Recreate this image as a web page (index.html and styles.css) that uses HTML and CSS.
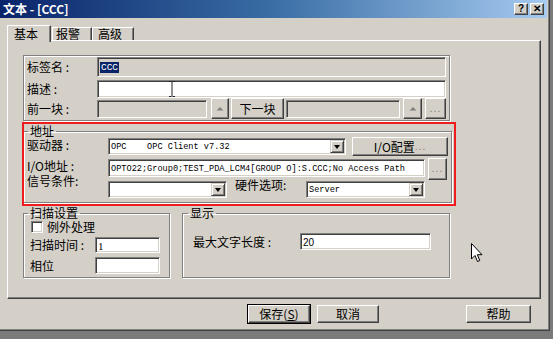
FILE: index.html
```html
<!DOCTYPE html>
<html>
<head>
<meta charset="utf-8">
<title>文本 - [CCC]</title>
<link rel="stylesheet" href="styles.css">
</head>
<body>
<div class="window">
  <div class="titlebar">
    <span class="title">文本 - [CCC]</span>
    <div class="tbtns"><span class="tbtn">?</span><span class="tbtn">✕</span></div>
  </div>
  <div class="tabs">
    <div class="tab active">基本</div>
    <div class="tab t2">报警</div>
    <div class="tab t3">高级</div>
  </div>
  <div class="panel">
    <div class="group1">
      <div class="row r1">
        <span class="lbl l70">标签名 :</span>
        <div class="field disabled w349"><span class="sel mono">CCC</span></div>
      </div>
      <div class="row r2">
        <span class="lbl l70">描述 :</span>
        <div class="field w349"></div>
      </div>
      <div class="row r3">
        <span class="lbl l70">前一块 :</span>
        <div class="field disabled w110 h18"></div>
        <div class="btn upbtn g4"><svg width="8" height="5" viewBox="0 0 8 5"><polygon points="0.5,4.5 4,1 7.5,4.5" fill="#808080"/></svg></div>
        <div class="btn nextbtn">下一块</div>
        <div class="field disabled w114 h18 g2"></div>
        <div class="btn upbtn2"><svg width="8" height="5" viewBox="0 0 8 5"><polygon points="0.5,4.5 4,1 7.5,4.5" fill="#808080"/></svg></div>
        <div class="btn dots1"><span class="dots">...</span></div>
      </div>
    </div>

    <fieldset class="gb addr">
      <legend>地址</legend>
      <div class="frow ra">
        <span class="lbl l81 mt2">驱动器 :</span>
        <div class="field combo w238"><span class="ctext mono">OPC&nbsp;&nbsp;&nbsp;&nbsp;OPC Client v7.32</span><span class="dd"><i class="tri"></i></span></div>
        <div class="btn iocfg">I/O配置 <span class="dots">...</span></div>
      </div>
      <div class="frow rb">
        <span class="lbl l81 mt3">I/O地址 :</span>
        <div class="field ioaddr"><span class="ctext mono">OPTO22;Group0;TEST_PDA_LCM4[GROUP O]:S.CCC;No Access Path</span></div>
        <div class="btn dots2"><span class="dots">...</span></div>
      </div>
      <div class="frow rc">
        <span class="lbl l81 sig">信号条件:</span>
        <div class="field combo w119"><span class="ctext"></span><span class="dd"><i class="tri"></i></span></div>
        <span class="lbl hw">硬件选项:</span>
        <div class="field combo w119"><span class="ctext mono">Server</span><span class="dd"><i class="tri"></i></span></div>
      </div>
    </fieldset>

    <div class="lower">
      <fieldset class="gb scan">
        <legend>扫描设置</legend>
        <div class="srow chk"><span class="checkbox"></span><span class="lbl">例外处理</span></div>
        <div class="srow s2"><span class="lbl l65">扫描时间 :</span><div class="field w65 h16"><span class="ctext serif">1</span></div></div>
        <div class="srow s3"><span class="lbl l65">相位</span><div class="field w65 h17"></div></div>
      </fieldset>
      <fieldset class="gb disp">
        <legend>显示</legend>
        <div class="srow d1"><span class="lbl l107">最大文字长度 :</span><div class="field w131 h17"><span class="ctext sans">20</span></div></div>
      </fieldset>
    </div>

    <div class="redbox"></div>
  </div>
  <div class="footer">
    <div class="btn fbtn default">保存(<u>S</u>)</div>
    <div class="btn fbtn">取消</div>
    <div class="btn fbtn help">帮助</div>
  </div>
</div>

<svg class="ibeam" width="8" height="16" viewBox="0 0 8 16">
  <path d="M1 0.5h2.5M4.5 0.5h2.5M4 1v14M1 15.5h2.5M4.5 15.5h2.5" stroke="#222" stroke-width="1" fill="none"/>
</svg>
<svg class="pointer" width="13" height="20" viewBox="0 0 13 20">
  <path d="M0.5 0.5 L0.5 16 L4 12.5 L6.5 18.5 L8.8 17.5 L6.3 11.7 L11 11.7 Z" fill="#fff" stroke="#000" stroke-width="1" stroke-linejoin="miter"/>
</svg>
</body>
</html>
```

FILE: styles.css
```css
* { box-sizing: border-box; }

body {
  margin: 0;
  width: 553px;
  height: 339px;
  background: #7b7b7b;
  font-family: "Noto Sans CJK SC", "Noto Sans", sans-serif;
  font-size: 12px;
  color: #000;
  position: relative;
  overflow: hidden;
}

.window {
  width: 550px;
  height: 331px;
  background: #d4d0c8;
  border-right: 1px solid #404040;
  border-bottom: 1px solid #404040;
  box-shadow: inset -1px -1px 0 #808080;
  display: flex;
  flex-direction: column;
}

/* title bar */
.titlebar {
  height: 18px;
  margin-right: 2px;
  background: linear-gradient(90deg, #0a246a 0%, #3a6ea5 50%, #a6caf0 100%);
  display: flex;
  align-items: center;
  justify-content: space-between;
  padding: 0 3px 0 3px;
  flex: none;
}
.title {
  color: #fff;
  font-weight: bold;
  font-size: 12px;
  line-height: 18px;
}
.tbtns { display: flex; gap: 2px; }
.tbtn {
  width: 14px;
  height: 12px;
  background: #d4d0c8;
  border: 1px solid;
  border-color: #fff #404040 #404040 #fff;
  box-shadow: inset -1px -1px 0 #808080;
  font-family: "Liberation Sans", sans-serif;
  font-weight: bold;
  font-size: 10px;
  line-height: 10px;
  text-align: center;
}

/* tabs */
.tabs {
  flex: none;
  height: 15px;
  margin-top: 7px;
  padding-left: 7px;
  display: flex;
  align-items: flex-end;
}
.tab {
  height: 13px;
  border: 1px solid;
  border-bottom: none;
  border-color: #fff #404040 transparent #fff;
  box-shadow: inset -1px 0 0 #808080;
  line-height: 12px;
  padding-left: 4px;
  background: #d4d0c8;
}
.tab.active {
  width: 44px;
  height: 17px;
  margin-bottom: -2px;
  margin-right: 1px;
  padding-left: 6px;
  padding-top: 2px;
  position: relative;
  z-index: 1;
}
.t2 { width: 40px; padding-left: 3px; }
.t3 { width: 42px; padding-left: 5px; }

/* panel */
.panel {
  flex: none;
  margin-left: 7px;
  width: 534px;
  height: 259px;
  border: 1px solid;
  border-color: #fff #404040 #404040 #fff;
  box-shadow: inset -1px -1px 0 #808080;
  padding: 14px 0 0 15px;
  position: relative;
}

/* generic controls */
.lbl { white-space: nowrap; line-height: 12px; flex: none; }
.l70 { width: 70px; }
.l81 { width: 81px; }
.l65 { width: 65px; margin-left: 3px; }
.l107 { width: 107px; margin-left: 7px; }

.field {
  flex: none;
  border: 1px solid;
  border-color: #808080 #fff #fff #808080;
  box-shadow: inset 1px 1px 0 #404040, inset -1px -1px 0 #d4d0c8;
  background: #fff;
  padding: 2px 2px 0 2px;
  display: flex;
  align-items: center;
  overflow: hidden;
}
.field.disabled { background: #d4d0c8; }
.w349 { width: 349px; height: 100%; }
.w110 { width: 110px; }
.w114 { width: 114px; }
.w238 { width: 238px; height: 17px; }
.w119 { width: 119px; height: 17px; }
.w65 { width: 65px; }
.w131 { width: 131px; }
.h16 { height: 16px; }
.h17 { height: 17px; }
.h18 { height: 18px; }

.mono {
  font-family: "Liberation Mono", monospace;
  font-size: 8.6px;
  line-height: 10px;
  white-space: pre;
}
.serif { font-family: "Liberation Serif", serif; font-size: 11px; line-height: 12px; }
.sans { font-family: "Liberation Sans", sans-serif; font-size: 10px; line-height: 12px; }
.ctext { flex: 1; white-space: pre; overflow: hidden; }

.sel {
  background: #0a246a;
  color: #fff;
  font-size: 9.4px;
  padding: 0 1px;
  line-height: 11px;
  margin-top: -1px;
}

.btn {
  flex: none;
  background: #d4d0c8;
  border: 1px solid;
  border-color: #fff #404040 #404040 #fff;
  box-shadow: inset -1px -1px 0 #808080;
  display: flex;
  align-items: center;
  justify-content: center;
  line-height: 12px;
  white-space: nowrap;
}
.dots {
  font-family: "Liberation Sans", sans-serif;
  font-size: 10px;
  color: #7a7a7a;
  letter-spacing: 1px;
}

.combo { padding: 1px 1px 1px 2px; align-items: stretch; }
.combo .ctext { display: flex; align-items: center; }
.dd {
  width: 14px;
  flex: none;
  background: #d4d0c8;
  border: 1px solid;
  border-color: #d4d0c8 #404040 #404040 #d4d0c8;
  box-shadow: inset 1px 1px 0 #fff, inset -1px -1px 0 #808080;
  display: flex;
  align-items: center;
  justify-content: center;
}
.tri {
  width: 0;
  height: 0;
  border-left: 3.5px solid transparent;
  border-right: 3.5px solid transparent;
  border-top: 4px solid #000;
}

/* group 1 */
.group1 {
  width: 427px;
  height: 66px;
  border: 1px solid #808080;
  box-shadow: inset 1px 1px 0 #fff, 1px 1px 0 #fff;
  padding: 1px 3px 1px 3px;
}
.row { display: flex; align-items: center; }
.r1 { height: 20px; }
.r2 { height: 18px; margin-top: 3px; }
.r3 { height: 21px; }
.upbtn { width: 18px; height: 21px; margin-left: 4px; }
.nextbtn { width: 53px; height: 21px; margin-left: 2px; }
.g2 { margin-left: 2px; }
.upbtn2 { width: 19px; height: 21px; margin-left: 3px; }
.dots1 { width: 21px; height: 21px; margin-left: 3px; }

/* group boxes */
.gb {
  margin: 0;
  border: 1px solid #808080;
  box-shadow: inset 1px 1px 0 #fff, 1px 1px 0 #fff;
  padding: 0 3px 3px 3px;
  min-width: 0;
}
.gb legend {
  padding: 0 2px;
  margin-left: 1px;
  line-height: 12px;
  font-size: 12px;
}
.addr { width: 429px; margin-top: 4px; }
.frow { display: flex; align-items: flex-start; }
.ra { height: 20px; }
.rb { height: 23px; }
.rc { height: 19px; }
.mt2 { margin-top: 2px; }
.mt3 { margin-top: 3px; }
.ra .combo { margin-top: 1px; }
.iocfg { width: 96px; height: 19px; margin-left: 6px; }
.ioaddr { width: 317px; height: 18px; margin-top: 2px; }
.dots2 { width: 19px; height: 22px; margin-left: 3px; margin-top: 1px; }
.sig { margin-top: -5px; }
.rc .combo { margin-top: 1px; }
.hw { width: 71px; margin-left: 8px; margin-top: -1px; }

.lower { display: flex; gap: 12px; margin-top: 4px; }
.scan { width: 147px; height: 71px; }
.disp { width: 268px; height: 71px; }
.disp legend { margin-left: 2px; }
.srow { display: flex; align-items: center; }
.chk { height: 12px; margin-top: 2px; padding-left: 4px; gap: 4px; }
.checkbox {
  width: 12px;
  height: 12px;
  background: #fff;
  border: 1px solid;
  border-color: #808080 #fff #fff #808080;
  box-shadow: inset 1px 1px 0 #404040, inset -1px -1px 0 #d4d0c8;
}
.s2 { margin-top: 4px; height: 16px; }
.s3 { margin-top: 4px; height: 17px; }
.d1 { margin-top: 14px; height: 17px; }

.redbox {
  position: absolute;
  left: 14px;
  top: 81px;
  width: 434px;
  height: 84px;
  border: 2px solid #ee1c1c;
  pointer-events: none;
}

/* footer */
.footer {
  flex: none;
  display: flex;
  padding: 6px 18px 0 248px;
  gap: 7px;
}
.fbtn { width: 62px; height: 18px; }
.fbtn.default {
  outline: 1px solid #000;
  outline-offset: 0;
  border-color: #fff #404040 #404040 #fff;
}
.fbtn u { text-underline-offset: 1px; }
.help { margin-left: auto; width: 65px; }

/* mouse cursors drawn over the screenshot */
.ibeam { position: absolute; left: 168px; top: 81px; }
.pointer { position: absolute; left: 471px; top: 243px; }
```
